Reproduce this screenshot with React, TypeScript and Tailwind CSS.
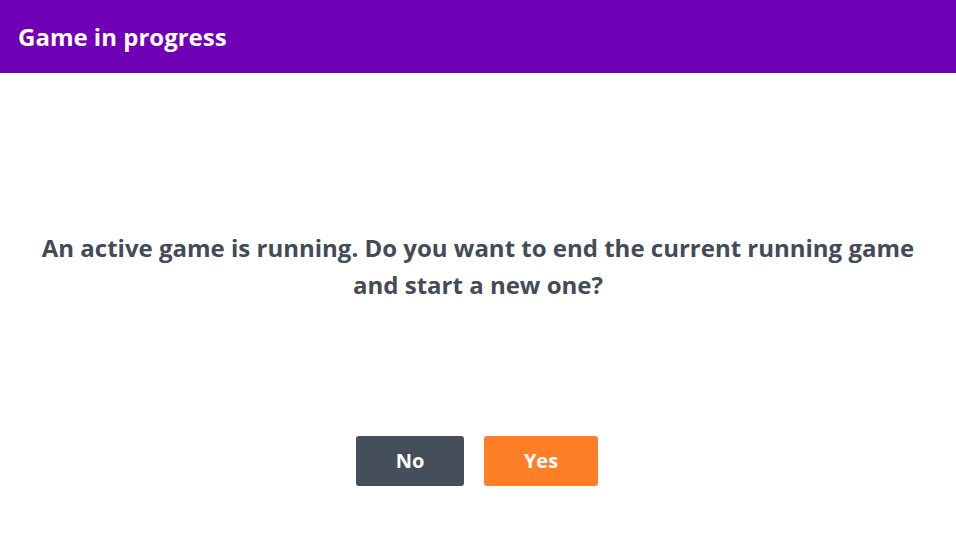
export default function App() {
  return (
    <div className="flex h-screen flex-col bg-white font-['Open_Sans',sans-serif]">
      <header className="flex h-[73px] items-center bg-[#6f00b5] px-[18px]">
        <h1 className="text-[24px] font-bold text-white">Game in progress</h1>
      </header>

      <main className="flex flex-col items-center px-6 pt-[156px]">
        <p className="text-center text-[24px] font-bold leading-[37px] text-[#434b56]">
          An active game is running. Do you want to end the current running game
          <br />
          and start a new one?
        </p>

        <div className="mt-[133px] flex gap-5 pr-[2px]">
          <button className="h-[50px] w-[108px] rounded-[3px] bg-[#454f5b] text-[20px] font-bold text-white">
            No
          </button>
          <button className="h-[50px] w-[114px] rounded-[3px] bg-[#ff7f27] text-[20px] font-bold text-white">
            Yes
          </button>
        </div>
      </main>
    </div>
  );
}
